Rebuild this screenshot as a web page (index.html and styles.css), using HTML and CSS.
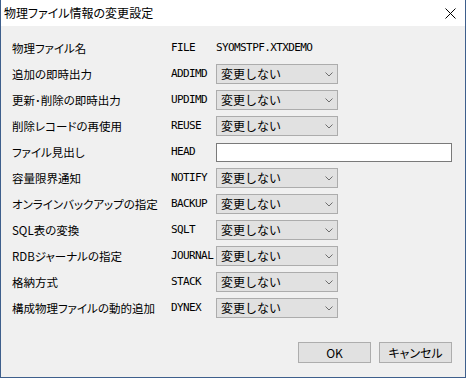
FILE: index.html
```html
<!DOCTYPE html>
<html>
<head>
    <meta charset="utf-8">
    <link rel="stylesheet" href="styles.css">
    <title>物理ファイル情報の変更設定</title>
</head>
<body>
    <div class="window">
        <div class="titlebar">
            <span class="title">物理ファイル情報の変更設定</span>
            <svg class="close" width="11" height="11" viewBox="0 0 11 11">
                <path d="M0.5 0.5 L10.5 10.5 M10.5 0.5 L0.5 10.5" stroke="#000" stroke-width="1" fill="none" />
            </svg>
        </div>
        <div class="client">
            <div class="form">
                <div class="row">
                    <span class="label">物理ファイル名</span>
                    <span class="code">FILE</span>
                    <span class="code value-text">SYOMSTPF.XTXDEMO</span>
                </div>
                <div class="row">
                    <span class="label">追加の即時出力</span>
                    <span class="code">ADDIMD</span>
                    <div class="combo"><span>変更しない</span><svg width="8" height="5" viewBox="0 0 8 5"><polyline points="0.5,0.5 4,4 7.5,0.5" stroke="#6d6d6d" fill="none" /></svg></div>
                </div>
                <div class="row">
                    <span class="label">更新･削除の即時出力</span>
                    <span class="code">UPDIMD</span>
                    <div class="combo"><span>変更しない</span><svg width="8" height="5" viewBox="0 0 8 5"><polyline points="0.5,0.5 4,4 7.5,0.5" stroke="#6d6d6d" fill="none" /></svg></div>
                </div>
                <div class="row">
                    <span class="label">削除レコードの再使用</span>
                    <span class="code">REUSE</span>
                    <div class="combo"><span>変更しない</span><svg width="8" height="5" viewBox="0 0 8 5"><polyline points="0.5,0.5 4,4 7.5,0.5" stroke="#6d6d6d" fill="none" /></svg></div>
                </div>
                <div class="row">
                    <span class="label">ファイル見出し</span>
                    <span class="code">HEAD</span>
                    <input class="text-input" type="text" />
                </div>
                <div class="row">
                    <span class="label">容量限界通知</span>
                    <span class="code">NOTIFY</span>
                    <div class="combo"><span>変更しない</span><svg width="8" height="5" viewBox="0 0 8 5"><polyline points="0.5,0.5 4,4 7.5,0.5" stroke="#6d6d6d" fill="none" /></svg></div>
                </div>
                <div class="row">
                    <span class="label">オンラインバックアップの指定</span>
                    <span class="code">BACKUP</span>
                    <div class="combo"><span>変更しない</span><svg width="8" height="5" viewBox="0 0 8 5"><polyline points="0.5,0.5 4,4 7.5,0.5" stroke="#6d6d6d" fill="none" /></svg></div>
                </div>
                <div class="row">
                    <span class="label">SQL表の変換</span>
                    <span class="code">SQLT</span>
                    <div class="combo"><span>変更しない</span><svg width="8" height="5" viewBox="0 0 8 5"><polyline points="0.5,0.5 4,4 7.5,0.5" stroke="#6d6d6d" fill="none" /></svg></div>
                </div>
                <div class="row">
                    <span class="label">RDBジャーナルの指定</span>
                    <span class="code">JOURNAL</span>
                    <div class="combo"><span>変更しない</span><svg width="8" height="5" viewBox="0 0 8 5"><polyline points="0.5,0.5 4,4 7.5,0.5" stroke="#6d6d6d" fill="none" /></svg></div>
                </div>
                <div class="row">
                    <span class="label">格納方式</span>
                    <span class="code">STACK</span>
                    <div class="combo"><span>変更しない</span><svg width="8" height="5" viewBox="0 0 8 5"><polyline points="0.5,0.5 4,4 7.5,0.5" stroke="#6d6d6d" fill="none" /></svg></div>
                </div>
                <div class="row">
                    <span class="label">構成物理ファイルの動的追加</span>
                    <span class="code">DYNEX</span>
                    <div class="combo"><span>変更しない</span><svg width="8" height="5" viewBox="0 0 8 5"><polyline points="0.5,0.5 4,4 7.5,0.5" stroke="#6d6d6d" fill="none" /></svg></div>
                </div>
            </div>
            <div class="buttons">
                <button class="btn">OK</button>
                <button class="btn">キャンセル</button>
            </div>
        </div>
    </div>
</body>
</html>
```

FILE: styles.css
```css
html, body {
    margin: 0;
    padding: 0;
}

body {
    font-family: "Noto Sans CJK JP", "Liberation Sans", sans-serif;
    font-size: 12px;
    color: #000;
    background: #f0f0f0;
}

.window {
    width: 466px;
    height: 378px;
    box-sizing: border-box;
    border: 1px solid #3e5f8c;
    border-top: none;
    display: flex;
    flex-direction: column;
    background: #f0f0f0;
}

.titlebar {
    height: 26px;
    flex: none;
    background: #fff;
    display: flex;
    align-items: center;
    justify-content: space-between;
    padding: 0 9px 0 3px;
    box-sizing: border-box;
}

.title {
    font-size: 12px;
    line-height: 14px;
    font-feature-settings: "palt";
}

.close {
    display: block;
    margin-top: 1px;
}

.client {
    flex: 1;
    display: flex;
    flex-direction: column;
    padding: 12px 13px 14px 11px;
}

.form {
    display: flex;
    flex-direction: column;
    gap: 6px;
}

.row {
    display: flex;
    align-items: center;
    height: 20px;
}

.label {
    width: 159px;
    flex: none;
    font-size: 11.5px;
    font-feature-settings: "palt";
    line-height: 14px;
    white-space: nowrap;
}

.code {
    width: 45px;
    flex: none;
    font-family: "DejaVu Sans Mono", "Liberation Mono", monospace;
    font-size: 11px;
    letter-spacing: -0.6px;
    line-height: 14px;
    white-space: nowrap;
}

.value-text {
    width: auto;
}

.combo {
    width: 122px;
    height: 20px;
    box-sizing: border-box;
    border: 1px solid #acacac;
    background: #e1e1e1;
    display: flex;
    align-items: center;
    justify-content: space-between;
    padding: 0 4px 0 4px;
}

.combo span {
    font-size: 12px;
    line-height: 14px;
}

.combo svg {
    display: block;
    margin-top: 1px;
}

.text-input {
    width: 237px;
    height: 19px;
    box-sizing: border-box;
    border: 1px solid #7a7a7a;
    background: #fff;
    margin: 0;
    padding: 0 3px;
    font: inherit;
    outline: none;
}

.buttons {
    margin-top: auto;
    display: flex;
    justify-content: flex-end;
    gap: 8px;
}

.btn {
    width: 73px;
    height: 21px;
    box-sizing: border-box;
    border: 1px solid #adadad;
    background: #e1e1e1;
    font-family: "Noto Sans CJK JP", "Liberation Sans", sans-serif;
    font-size: 12px;
    line-height: 14px;
    padding: 0;
    color: #000;
    font-feature-settings: "palt";
}
```
